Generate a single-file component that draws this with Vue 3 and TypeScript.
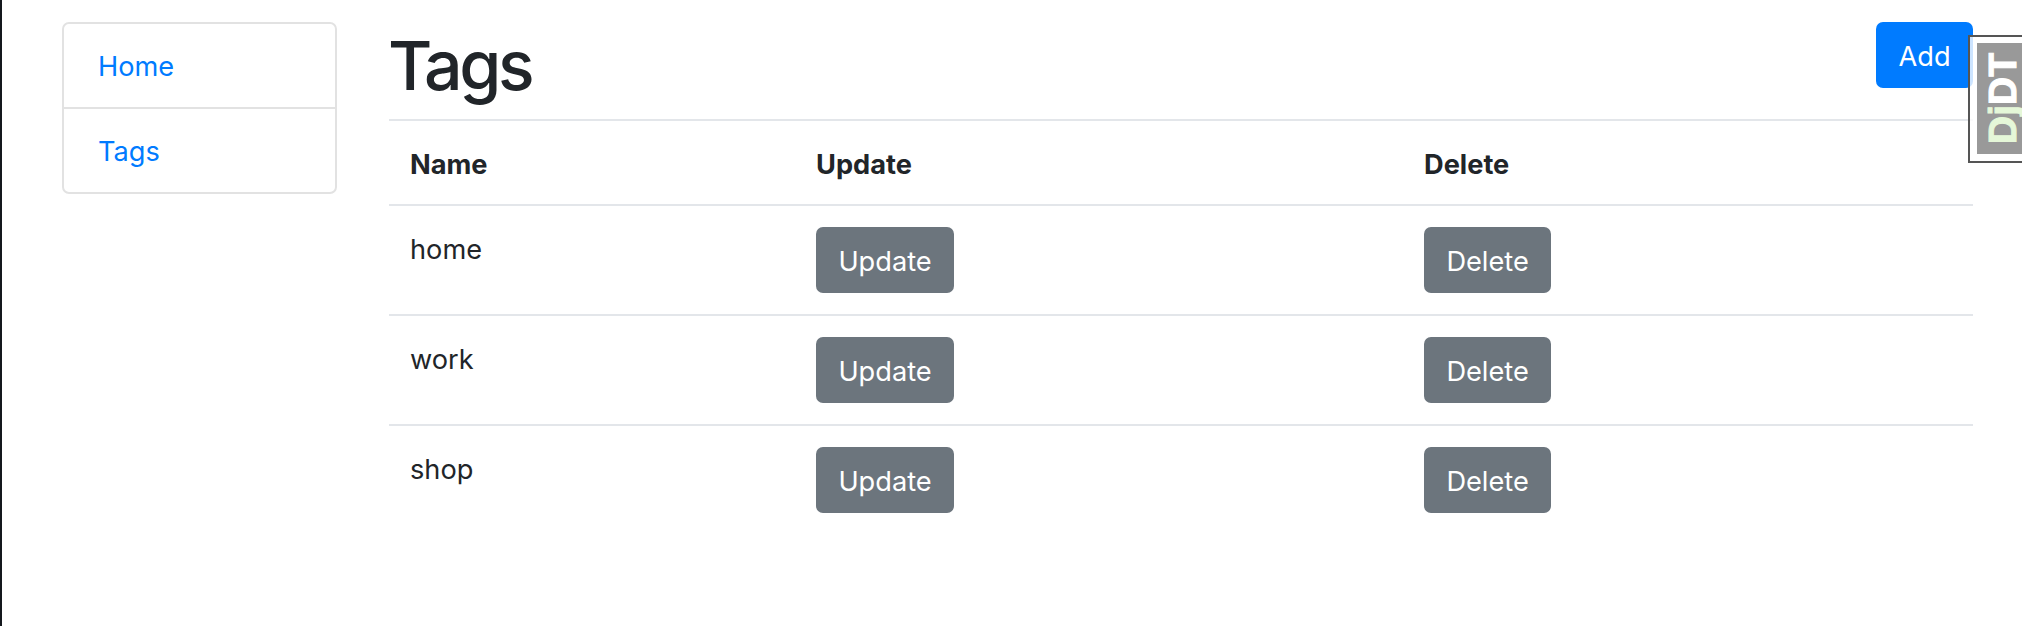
<template>
  <div class="page">
    <nav class="side-nav">
      <a v-for="link in links" :key="link" class="side-link" href="#">{{ link }}</a>
    </nav>
    <main class="content">
      <header class="title-row">
        <h1>Tags</h1>
        <button class="btn btn-primary">Add</button>
      </header>
      <table>
        <colgroup>
          <col class="col-name" />
          <col class="col-update" />
          <col />
        </colgroup>
        <thead>
          <tr>
            <th>Name</th>
            <th>Update</th>
            <th>Delete</th>
          </tr>
        </thead>
        <tbody>
          <tr v-for="tag in tags" :key="tag">
            <td class="tag-name">{{ tag }}</td>
            <td><button class="btn btn-secondary">Update</button></td>
            <td><button class="btn btn-secondary">Delete</button></td>
          </tr>
        </tbody>
      </table>
    </main>
    <div class="djdt-handle">
      <div class="djdt-label"><span class="dj">Dj</span>DT</div>
    </div>
  </div>
</template>

<script setup lang="ts">
const links: string[] = ['Home', 'Tags']
const tags: string[] = ['home', 'work', 'shop']
</script>

<style>
html,
body {
  margin: 0;
  background: #fff;
}
</style>

<style scoped>
.page {
  position: relative;
  display: flex;
  align-items: flex-start;
  gap: 52px;
  height: 626px;
  box-sizing: border-box;
  padding: 22px 49px 0 60px;
  border-left: 2px solid #14181d;
  overflow: hidden;
  font-family: Inter, "Liberation Sans", sans-serif;
  font-size: 27.2px;
  line-height: 41px;
  color: #212529;
}

.side-nav {
  display: flex;
  flex-direction: column;
  flex: 0 0 275px;
  box-sizing: border-box;
  border: 2px solid #e2e2e2;
  border-radius: 7px;
}

.side-link {
  padding: 22px 33px 20px 34px;
  color: #007bff;
  text-decoration: none;
}

.side-link + .side-link {
  border-top: 2px solid #e2e2e2;
}

.content {
  flex: 1;
  min-width: 0;
}

.title-row {
  display: flex;
  justify-content: space-between;
  align-items: flex-start;
  height: 97px;
}

h1 {
  margin: 0 0 0 -1px;
  font-size: 68px;
  font-weight: 500;
  letter-spacing: -3.4px;
  line-height: 86px;
}

.btn {
  box-sizing: border-box;
  height: 66px;
  padding: 2px 20.4px 0;
  border: 2px solid transparent;
  border-radius: 7px;
  font: inherit;
  color: #fff;
}

.btn-primary {
  background: #007bff;
}

.btn-secondary {
  background: #6c757d;
}

table {
  width: 100%;
  table-layout: fixed;
  border-collapse: collapse;
}

.col-name {
  width: 406px;
}

.col-update {
  width: 608px;
}

th,
td {
  padding: 21px;
  border-top: 2px solid #e3e6ea;
  text-align: left;
  vertical-align: top;
}

th {
  padding: 23px 21px 19px;
  font-weight: 700;
}

.tag-name {
  padding-top: 23px;
}

.djdt-handle {
  position: absolute;
  top: 35px;
  left: 1966px;
  right: 0;
  height: 128px;
  box-sizing: border-box;
  padding: 6px 0 7px 7px;
  border: 2px solid #555;
  border-right: 0;
  background: rgba(255, 255, 255, 0.8);
}

.djdt-label {
  height: 100%;
  box-sizing: border-box;
  padding: 10px 6px 0 0;
  background: #999;
  color: #fff;
  font-family: "Liberation Sans", sans-serif;
  font-size: 39px;
  font-weight: 700;
  line-height: 39px;
  white-space: nowrap;
  writing-mode: vertical-rl;
  transform: rotate(180deg);
  -webkit-text-stroke: 1px currentColor;
}

.dj {
  color: #e5f7d8;
}
</style>
